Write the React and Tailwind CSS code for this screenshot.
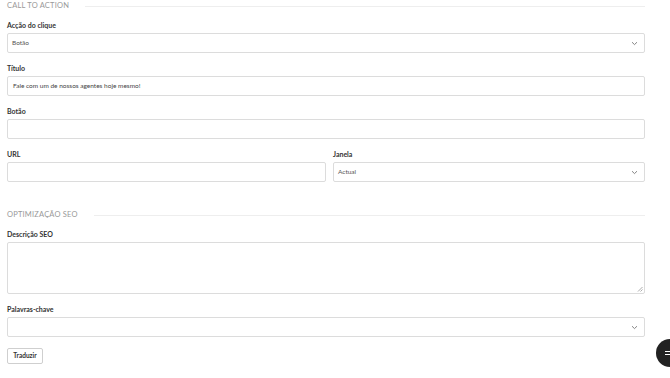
import React from 'react';

const Chevron = () => (
  <svg width="7" height="5" viewBox="0 0 7 5" className="text-[#777]">
    <path d="M1 1.2 L3.5 3.6 L6 1.2" fill="none" stroke="currentColor" strokeWidth="0.9" />
  </svg>
);

const SectionTitle = ({ children }) => (
  <div className="flex items-center h-[10px] gap-[16px]">
    <span className="text-[7.5px] leading-[10px] text-[#999] uppercase tracking-[0.2px] whitespace-nowrap">{children}</span>
    <div className="flex-1 h-px bg-[#eeeeee]" />
  </div>
);

const Label = ({ children }) => (
  <div className="text-[7px] leading-[10px] font-bold text-[#333] mb-[3px]">{children}</div>
);

const Input = ({ value }) => (
  <div className="h-[20px] border border-[#dcdcdc] rounded-[2px] bg-white flex items-center px-[5px] text-[6.5px] text-[#444]">
    {value}
  </div>
);

const Select = ({ value }) => (
  <div className="h-[20px] border border-[#dcdcdc] rounded-[2px] bg-white flex items-center justify-between pl-[4px] pr-[6px] text-[6.5px] text-[#555]">
    <span>{value}</span>
    <Chevron />
  </div>
);

const App = () => {
  return (
    <div className="relative w-[670px] h-[378px] overflow-hidden bg-white font-['Lato',sans-serif]">
      <div className="w-[638px] ml-[7px] pt-px">
        <SectionTitle>Call to action</SectionTitle>
        <div className="mt-[9px] flex flex-col gap-[10px]">
          <div>
            <Label>Acção do clique</Label>
            <Select value="Botão" />
          </div>
          <div>
            <Label>Título</Label>
            <Input value="Fale com um de nossos agentes hoje mesmo!" />
          </div>
          <div>
            <Label>Botão</Label>
            <Input value="" />
          </div>
          <div className="flex gap-[7px]">
            <div className="w-[319px]">
              <Label>URL</Label>
              <Input value="" />
            </div>
            <div className="flex-1">
              <Label>Janela</Label>
              <Select value="Actual" />
            </div>
          </div>
        </div>

        <div className="mt-[28px]">
          <SectionTitle>Optimização SEO</SectionTitle>
        </div>
        <div className="mt-[9px] flex flex-col gap-[10px]">
          <div>
            <Label>Descrição SEO</Label>
            <div className="relative h-[52px] border border-[#dcdcdc] rounded-[2px] bg-white">
              <svg width="6" height="6" viewBox="0 0 6 6" className="absolute right-[1px] bottom-[1px]">
                <path d="M5.5 1 L1 5.5 M5.5 3.5 L3.5 5.5" stroke="#888" strokeWidth="0.7" />
              </svg>
            </div>
          </div>
          <div>
            <Label>Palavras-chave</Label>
            <Select value="" />
          </div>
        </div>

        <button className="mt-[11px] h-[16px] w-[36px] border border-[#cfcfcf] rounded-[2px] bg-white text-[6.5px] font-bold text-[#333] flex items-center justify-center">
          Traduzir
        </button>
      </div>

      <div className="absolute left-[656px] top-[339px] w-[28px] h-[28px] rounded-full bg-[#222] flex items-center pl-[9px]">
        <div className="flex flex-col gap-[2px]">
          <div className="w-[5px] h-px bg-white" />
          <div className="w-[5px] h-px bg-white" />
        </div>
      </div>
    </div>
  );
};

export default App;
